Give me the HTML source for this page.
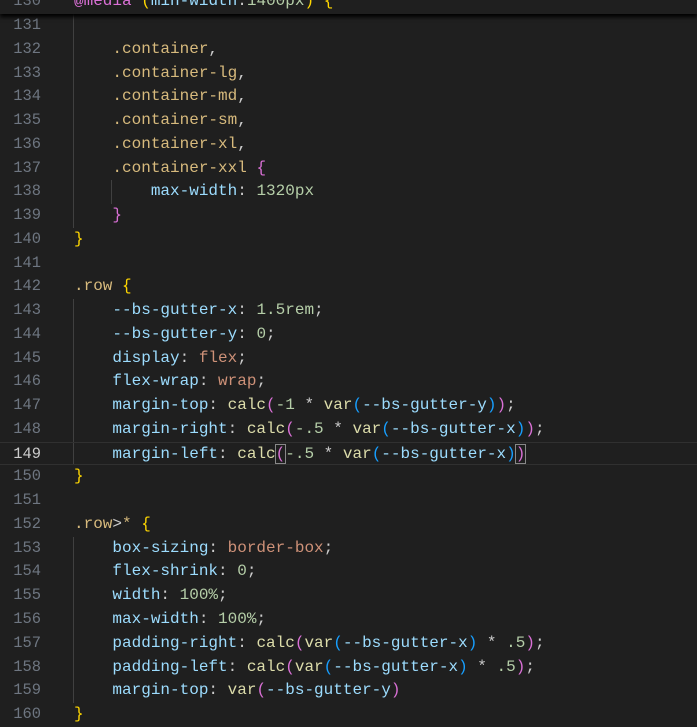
<!DOCTYPE html>
<html><head><style>
body{margin:0;background:#1f1f1f;width:697px;height:725px;overflow:hidden;position:relative;font-family:"Liberation Mono",monospace;font-size:16px;}
.w{position:absolute;left:0;top:2px;width:697px;height:725px}
.l{position:absolute;left:0;width:697px;height:23.76px;line-height:23.76px;white-space:pre;}
.n{position:absolute;left:0;width:41px;text-align:right;color:#6e7681;font-size:15.4px}
.c{position:absolute;left:74px;color:#cccccc;}
.s{color:#d7ba7d}.p{color:#9cdcfe}.v{color:#ce9178}.u{color:#b5cea8}.f{color:#dcdcaa}
.g{color:#ffd700}.k{color:#da70d6}.b{color:#179fff}
.cur{border-top:1px solid #303030;border-bottom:1px solid #303030;box-sizing:border-box}
.guide{position:absolute;width:1px;background:#404040}
.bx{outline:1px solid #888;}
</style></head><body>
<div class="w">
<div class="guide" style="left:73px;top:12px;height:214px"></div>
<div class="guide" style="left:111px;top:178px;height:24px"></div>
<div class="guide" style="left:73px;top:297px;height:166px"></div>
<div class="guide" style="left:73px;top:535px;height:166px"></div>

<div class="l" style="top:12px"><span class="n">131</span></div>
<div class="l" style="top:35.76px"><span class="n">132</span><span class="c">    <span class="s">.container</span>,</span></div>
<div class="l" style="top:59.52px"><span class="n">133</span><span class="c">    <span class="s">.container-lg</span>,</span></div>
<div class="l" style="top:83.28px"><span class="n">134</span><span class="c">    <span class="s">.container-md</span>,</span></div>
<div class="l" style="top:107.04px"><span class="n">135</span><span class="c">    <span class="s">.container-sm</span>,</span></div>
<div class="l" style="top:130.8px"><span class="n">136</span><span class="c">    <span class="s">.container-xl</span>,</span></div>
<div class="l" style="top:154.56px"><span class="n">137</span><span class="c">    <span class="s">.container-xxl</span> <span class="k">{</span></span></div>
<div class="l" style="top:178.32px"><span class="n">138</span><span class="c">        <span class="p">max-width</span>: <span class="u">1320px</span></span></div>
<div class="l" style="top:202.08px"><span class="n">139</span><span class="c">    <span class="k">}</span></span></div>
<div class="l" style="top:225.84px"><span class="n">140</span><span class="c"><span class="g">}</span></span></div>
<div class="l" style="top:249.6px"><span class="n">141</span></div>
<div class="l" style="top:273.36px"><span class="n">142</span><span class="c"><span class="s">.row</span> <span class="g">{</span></span></div>
<div class="l" style="top:297.12px"><span class="n">143</span><span class="c">    <span class="p">--bs-gutter-x</span>: <span class="u">1.5rem</span>;</span></div>
<div class="l" style="top:320.88px"><span class="n">144</span><span class="c">    <span class="p">--bs-gutter-y</span>: <span class="u">0</span>;</span></div>
<div class="l" style="top:344.64px"><span class="n">145</span><span class="c">    <span class="p">display</span>: <span class="v">flex</span>;</span></div>
<div class="l" style="top:368.4px"><span class="n">146</span><span class="c">    <span class="p">flex-wrap</span>: <span class="v">wrap</span>;</span></div>
<div class="l" style="top:392.16px"><span class="n">147</span><span class="c">    <span class="p">margin-top</span>: <span class="f">calc</span><span class="k">(</span><span class="u">-1</span> * <span class="f">var</span><span class="b">(</span><span class="p">--bs-gutter-y</span><span class="b">)</span><span class="k">)</span>;</span></div>
<div class="l" style="top:415.92px"><span class="n">148</span><span class="c">    <span class="p">margin-right</span>: <span class="f">calc</span><span class="k">(</span><span class="u">-.5</span> * <span class="f">var</span><span class="b">(</span><span class="p">--bs-gutter-x</span><span class="b">)</span><span class="k">)</span>;</span></div>
<div class="l cur" style="top:439.68px"><span class="n" style="color:#cccccc">149</span><span class="c">    <span class="p">margin-left</span>: <span class="f">calc</span><span class="k bx">(</span><span class="u">-.5</span> * <span class="f">var</span><span class="b">(</span><span class="p">--bs-gutter-x</span><span class="b">)</span><span class="k bx">)</span></span></div>
<div class="l" style="top:463.44px"><span class="n">150</span><span class="c"><span class="g">}</span></span></div>
<div class="l" style="top:487.2px"><span class="n">151</span></div>
<div class="l" style="top:510.96px"><span class="n">152</span><span class="c"><span class="s">.row</span>&gt;<span class="s">*</span> <span class="g">{</span></span></div>
<div class="l" style="top:534.72px"><span class="n">153</span><span class="c">    <span class="p">box-sizing</span>: <span class="v">border-box</span>;</span></div>
<div class="l" style="top:558.48px"><span class="n">154</span><span class="c">    <span class="p">flex-shrink</span>: <span class="u">0</span>;</span></div>
<div class="l" style="top:582.24px"><span class="n">155</span><span class="c">    <span class="p">width</span>: <span class="u">100%</span>;</span></div>
<div class="l" style="top:606px"><span class="n">156</span><span class="c">    <span class="p">max-width</span>: <span class="u">100%</span>;</span></div>
<div class="l" style="top:629.76px"><span class="n">157</span><span class="c">    <span class="p">padding-right</span>: <span class="f">calc</span><span class="k">(</span><span class="f">var</span><span class="b">(</span><span class="p">--bs-gutter-x</span><span class="b">)</span> * <span class="u">.5</span><span class="k">)</span>;</span></div>
<div class="l" style="top:653.52px"><span class="n">158</span><span class="c">    <span class="p">padding-left</span>: <span class="f">calc</span><span class="k">(</span><span class="f">var</span><span class="b">(</span><span class="p">--bs-gutter-x</span><span class="b">)</span> * <span class="u">.5</span><span class="k">)</span>;</span></div>
<div class="l" style="top:677.28px"><span class="n">159</span><span class="c">    <span class="p">margin-top</span>: <span class="f">var</span><span class="k">(</span><span class="p">--bs-gutter-y</span><span class="k">)</span></span></div>
<div class="l" style="top:701.04px"><span class="n">160</span><span class="c"><span class="g">}</span></span></div>
</div>
<div style="position:absolute;left:0;top:0;width:697px;height:14px;overflow:hidden;background:#1f1f1f;box-shadow:0 3px 4px #000;">
<div class="l" style="top:-9.76px"><span class="n">130</span><span class="c"><span class="k">@media</span> <span class="g">(</span><span class="p">min-width</span>:<span class="u">1400px</span><span class="g">)</span> <span class="g">{</span></span></div>
</div>
</body></html>
